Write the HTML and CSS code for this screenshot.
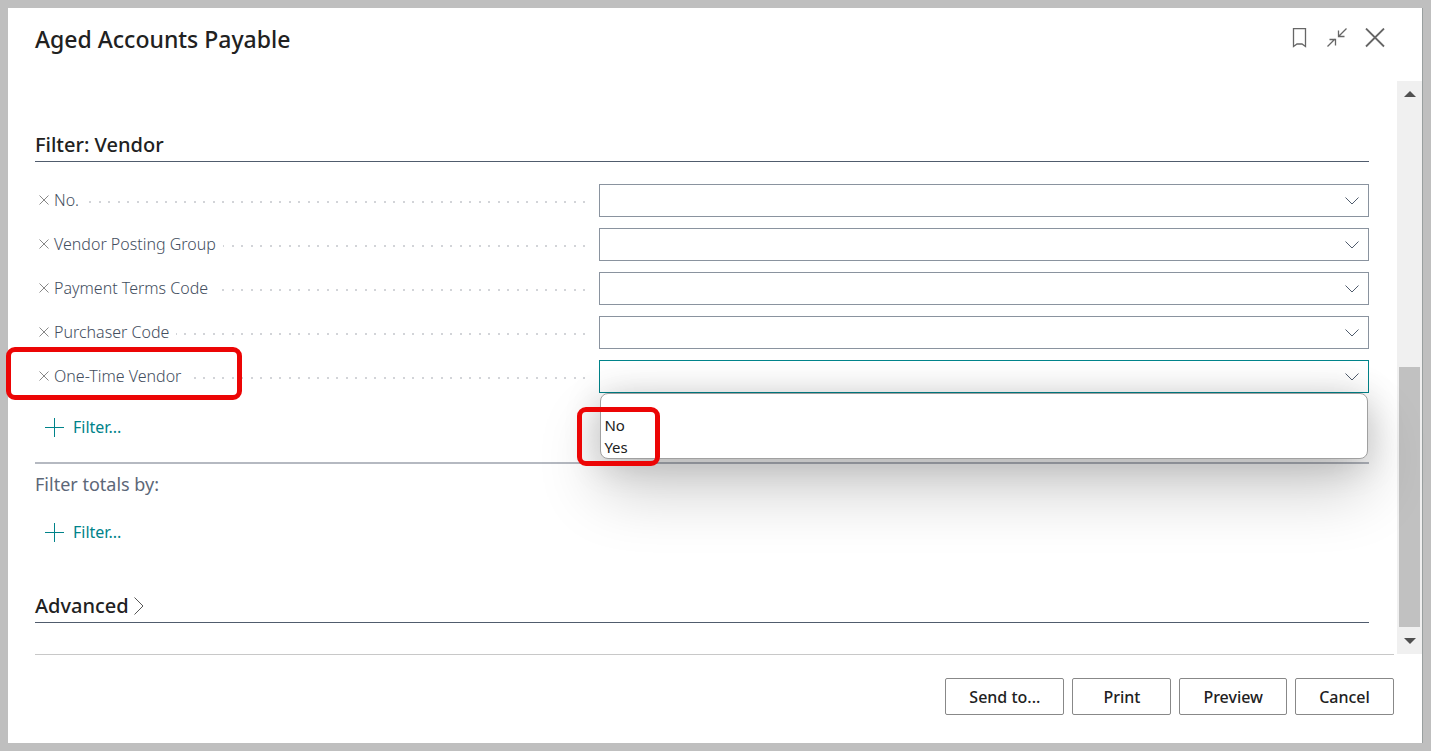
FILE: index.html
```
<!DOCTYPE html>
<html lang="en">
<head>
<meta charset="UTF-8" />
<meta name="viewport" content="width=device-width, initial-scale=1" />
<title>Aged Accounts Payable</title>
<link rel="stylesheet" href="styles.css">
</head>
<body>
<main class="dialog" role="dialog" aria-labelledby="dialogTitle">
  <header class="dialog-header">
    <h1 id="dialogTitle">Aged Accounts Payable</h1>
    <div class="header-actions">
      <button type="button" class="icon-btn" aria-label="Bookmark">
        <svg width="20" height="20" viewBox="0 0 20 20"><path d="M4.500 .5h12v18l-3.500-2.500h-5l-3.500 2.500z" /></svg>
      </button>
      <button type="button" class="icon-btn" aria-label="Collapse">
        <svg width="20" height="20" viewBox="0 0 20 20"><path d="M19.500 .5l-7.500 7.500M11.500 2.500v6h6M.5 18.500l7.500-7.500M2.500 11.500h6v6" /></svg>
      </button>
      <button type="button" class="icon-btn close" aria-label="Close">
        <svg width="20" height="20" viewBox="0 0 20 20"><path d="M1 .5l18 18M19 .5l-18 18" /></svg>
      </button>
    </div>
  </header>

  <div class="dialog-body">
    <form class="content" id="reportForm">
      <h2 class="group-title">Filter: Vendor</h2>

      <div class="fields">
        <div class="field">
          <div class="caption">
            <button type="button" class="remove" aria-label="Remove filter No."><svg width="10" height="10" viewBox="0 0 10 10"><path d="M.5 .5l9 9M9.500 .5l-9 9" /></svg></button>
            <label for="no">No.</label>
            <span class="dots"></span>
          </div>
          <div class="control">
            <select id="no" name="no"><option></option></select>
            <svg class="chevron" width="14" height="8" viewBox="0 0 14 8"><path d="M.5 .5l6.500 6.500 6.500-6.500" /></svg>
          </div>
        </div>

        <div class="field">
          <div class="caption">
            <button type="button" class="remove" aria-label="Remove filter Vendor Posting Group"><svg width="10" height="10" viewBox="0 0 10 10"><path d="M.5 .5l9 9M9.500 .5l-9 9" /></svg></button>
            <label for="postingGroup">Vendor Posting Group</label>
            <span class="dots"></span>
          </div>
          <div class="control">
            <select id="postingGroup" name="postingGroup"><option></option></select>
            <svg class="chevron" width="14" height="8" viewBox="0 0 14 8"><path d="M.5 .5l6.500 6.500 6.500-6.500" /></svg>
          </div>
        </div>

        <div class="field">
          <div class="caption">
            <button type="button" class="remove" aria-label="Remove filter Payment Terms Code"><svg width="10" height="10" viewBox="0 0 10 10"><path d="M.5 .5l9 9M9.500 .5l-9 9" /></svg></button>
            <label for="paymentTerms">Payment Terms Code</label>
            <span class="dots"></span>
          </div>
          <div class="control">
            <select id="paymentTerms" name="paymentTerms"><option></option></select>
            <svg class="chevron" width="14" height="8" viewBox="0 0 14 8"><path d="M.5 .5l6.500 6.500 6.500-6.500" /></svg>
          </div>
        </div>

        <div class="field">
          <div class="caption">
            <button type="button" class="remove" aria-label="Remove filter Purchaser Code"><svg width="10" height="10" viewBox="0 0 10 10"><path d="M.5 .5l9 9M9.500 .5l-9 9" /></svg></button>
            <label for="purchaser">Purchaser Code</label>
            <span class="dots"></span>
          </div>
          <div class="control">
            <select id="purchaser" name="purchaser"><option></option></select>
            <svg class="chevron" width="14" height="8" viewBox="0 0 14 8"><path d="M.5 .5l6.500 6.500 6.500-6.500" /></svg>
          </div>
        </div>

        <div class="field">
          <div class="caption">
            <button type="button" class="remove" aria-label="Remove filter One-Time Vendor"><svg width="10" height="10" viewBox="0 0 10 10"><path d="M.5 .5l9 9M9.500 .5l-9 9" /></svg></button>
            <label for="oneTime">One-Time Vendor</label>
            <span class="dots"></span>
            <span class="highlight highlight-label"></span>
          </div>
          <div class="control active">
            <select id="oneTime" name="oneTime"><option></option></select>
            <svg class="chevron" width="14" height="8" viewBox="0 0 14 8"><path d="M.5 .5l6.500 6.500 6.500-6.500" /></svg>
            <ul class="options" role="listbox" aria-label="One-Time Vendor">
              <li class="blank" role="option"></li>
              <li role="option">No</li>
              <li role="option">Yes</li>
              <li class="highlight highlight-options" role="presentation"></li>
            </ul>
          </div>
        </div>
      </div>

      <button type="button" class="add-filter">
        <svg width="19" height="19" viewBox="0 0 19 19"><path d="M9.500 0v19M0 9.500h19" /></svg>
        Filter...
      </button>

      <h3 class="totals-title">Filter totals by:</h3>
      <button type="button" class="add-filter">
        <svg width="19" height="19" viewBox="0 0 19 19"><path d="M9.500 0v19M0 9.500h19" /></svg>
        Filter...
      </button>

      <h2 class="group-title advanced">
        Advanced
        <svg width="10" height="18" viewBox="0 0 10 18"><path d="M.5 .5l8.500 8.500-8.500 8.500" /></svg>
      </h2>
    </form>

    <div class="scrollbar" aria-hidden="true">
      <svg width="12" height="6" viewBox="0 0 12 6"><path d="M0 6l6-6 6 6z" /></svg>
      <div class="thumb"></div>
      <svg width="12" height="6" viewBox="0 0 12 6"><path d="M0 0l6 6 6-6z" /></svg>
    </div>
  </div>

  <footer class="dialog-footer">
    <button type="button">Send to...</button>
    <button type="button">Print</button>
    <button type="button">Preview</button>
    <button type="button">Cancel</button>
  </footer>
</main>
</body>
</html>
```

FILE: styles.css
```
* {
  box-sizing: border-box;
}
body {
  margin: 0;
  padding: 8px;
  min-height: 100vh;
  display: flex;
  background: #bfbfbf;
  color: #212121;
  font-family: "Segoe UI", "Noto Sans", "Open Sans", sans-serif;
  font-size: 16px;
  line-height: 22px;
}
h1, h2, h3, ul {
  margin: 0;
  padding: 0;
}
button {
  font: inherit;
  color: inherit;
  background: none;
  border: 0;
  padding: 0;
  cursor: pointer;
}
svg {
  display: block;
  flex: none;
  fill: none;
  stroke: currentColor;
}
.dialog {
  flex: 1;
  display: flex;
  flex-direction: column;
  background: #fff;
  border-right: 1px solid #999f9f;
}

/* header */
.dialog-header {
  display: flex;
  justify-content: space-between;
  align-items: flex-start;
  height: 73px;
  padding: 16px 37px 0 27px;
}
.dialog-header h1 {
  font-size: 23px;
  line-height: 30px;
  font-weight: 500;
}
.header-actions {
  display: flex;
  gap: 18px;
  padding-top: 4px;
  color: #666;
}
.icon-btn svg {
  stroke-width: 1.3;
}
.icon-btn.close svg {
  stroke-width: 1.8;
}

/* scrolling area */
.dialog-body {
  flex: 1;
  display: flex;
}
.content {
  flex: 1;
  padding: 50px 28px 0 27px;
}
.group-title {
  display: flex;
  align-items: center;
  gap: 5px;
  font-size: 20px;
  line-height: 28px;
  font-weight: 500;
  height: 31px;
  padding-bottom: 2px;
  border-bottom: 1px solid #505c6d;
}
.fields {
  display: grid;
  gap: 11px;
  padding-top: 22px;
}
.field {
  display: grid;
  grid-template-columns: 11fr 15fr;
  height: 33px;
}
.caption {
  position: relative;
  display: flex;
  align-items: center;
  padding: 0 14px 2px 4px;
  color: #434e5e;
  font-weight: 300;
}
.remove {
  color: #888;
  margin-right: 5px;
}
.dots {
  flex: 1;
  height: 2px;
  margin: 4px 0 0 7px;
  background: repeating-linear-gradient(to left, #d2d4d8 0 2px, transparent 2px 9px, #d2d4d8 9px 11px, transparent 11px 19px);
}
.control {
  position: relative;
}
.control select {
  display: block;
  width: 100%;
  height: 33px;
  padding: 0 8px;
  font: inherit;
  appearance: none;
  background: none;
  border: 1px solid #8a939f;
  border-radius: 0;
  outline: none;
}
.control.active select {
  border-color: #00838a;
}
.chevron {
  position: absolute;
  right: 10px;
  top: 13px;
  color: #505c6d;
  pointer-events: none;
}
.options {
  position: absolute;
  z-index: 1;
  top: 33px;
  left: 1px;
  right: 1px;
  list-style: none;
  font-size: 15px;
  background: #fff;
  border: 1px solid #a0a0a0;
  border-radius: 8px;
  box-shadow: 0 32px 64px rgba(0, 0, 0, 0.2), 0 4px 36px rgba(0, 0, 0, 0.2);
}
.options li {
  padding-left: 3px;
}
.options .blank {
  height: 20px;
}
.add-filter {
  display: flex;
  align-items: center;
  gap: 9px;
  margin: 23px 0 24px 10px;
  color: #00838a;
}
.totals-title {
  padding: 8px 0 2px;
  border-top: 2px solid #b5b9c1;
  color: #5c6778;
  font-size: 18px;
  line-height: 24px;
  font-weight: 400;
}
.advanced {
  margin-top: 49px;
}
.advanced svg {
  color: #555;
}

/* callouts */
.highlight {
  position: absolute;
  z-index: 2;
  border: 5px solid #ec0505;
  border-radius: 9px;
}
.highlight-label {
  left: -29px;
  top: -13px;
  width: 236px;
  height: 53px;
}
.highlight-options {
  left: -24px;
  top: 13px;
  width: 83px;
  height: 59px;
}

.scrollbar {
  display: flex;
  flex-direction: column;
  align-items: center;
  width: 25px;
  padding: 10px 0;
  background: #f0f0f0;
  color: #505050;
}
.scrollbar svg {
  fill: currentColor;
  stroke: none;
}
.thumb {
  width: 21px;
  height: 47%;
  margin: auto 0 11px;
  background: #c1c1c1;
}

/* footer */
.dialog-footer {
  display: flex;
  justify-content: flex-end;
  gap: 8px;
  margin: 0 28px 0 27px;
  padding: 23px 0 28px;
  border-top: 1px solid #c8c8c8;
}
.dialog-footer button {
  height: 37px;
  min-width: 99px;
  padding: 0 23px;
  border: 1px solid #888;
  border-radius: 2px;
  font-weight: 500;
}
```
